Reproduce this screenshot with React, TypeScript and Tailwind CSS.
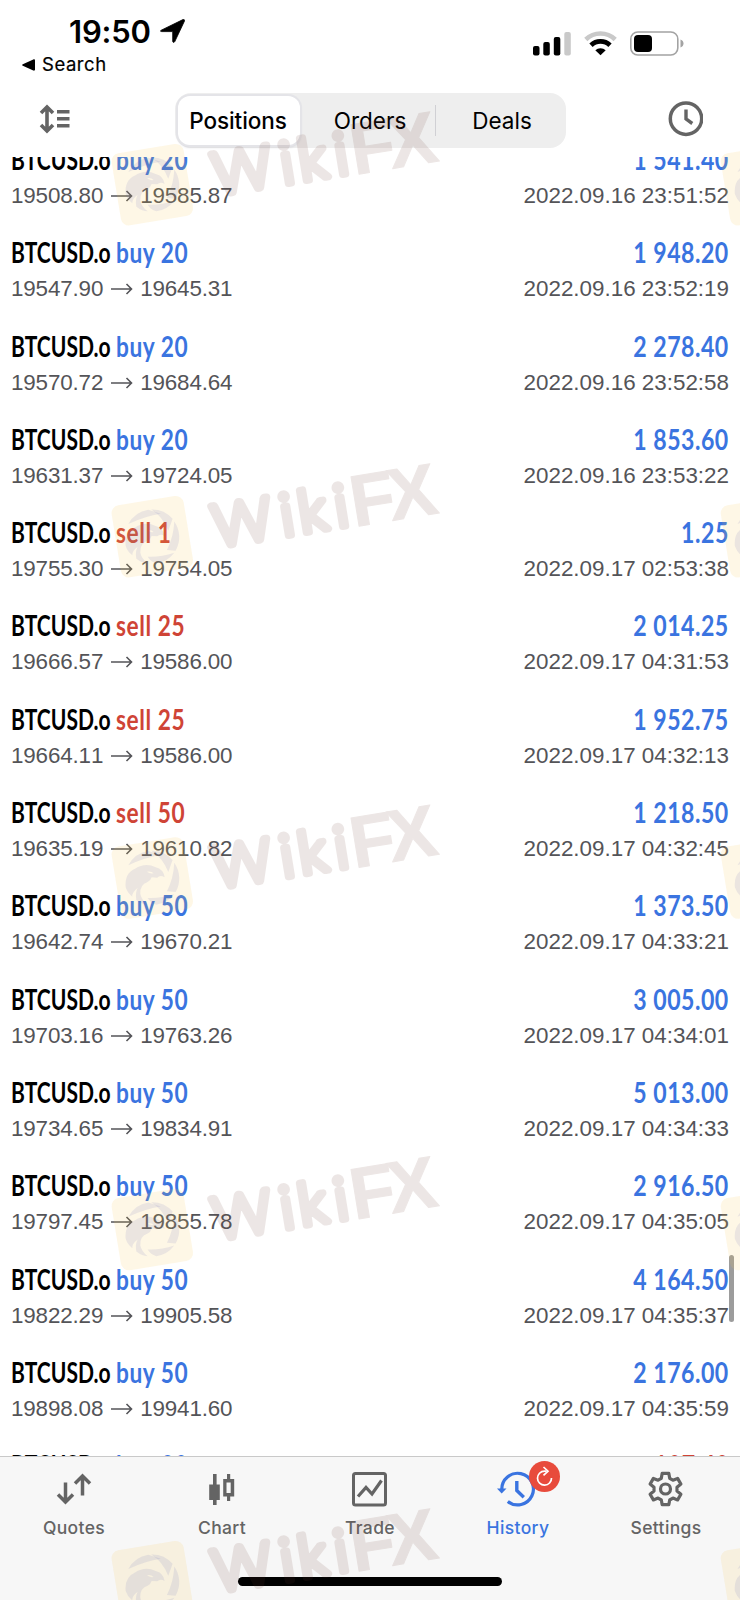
import React from 'react';

type Side = 'buy' | 'sell';

interface Position {
  side: Side;
  lots: number;
  open: string;
  close: string;
  profit: string;
  time: string;
}

const positions: Position[] = [
  { side: 'buy', lots: 20, open: '19508.80', close: '19585.87', profit: '1 541.40', time: '2022.09.16 23:51:52' },
  { side: 'buy', lots: 20, open: '19547.90', close: '19645.31', profit: '1 948.20', time: '2022.09.16 23:52:19' },
  { side: 'buy', lots: 20, open: '19570.72', close: '19684.64', profit: '2 278.40', time: '2022.09.16 23:52:58' },
  { side: 'buy', lots: 20, open: '19631.37', close: '19724.05', profit: '1 853.60', time: '2022.09.16 23:53:22' },
  { side: 'sell', lots: 1, open: '19755.30', close: '19754.05', profit: '1.25', time: '2022.09.17 02:53:38' },
  { side: 'sell', lots: 25, open: '19666.57', close: '19586.00', profit: '2 014.25', time: '2022.09.17 04:31:53' },
  { side: 'sell', lots: 25, open: '19664.11', close: '19586.00', profit: '1 952.75', time: '2022.09.17 04:32:13' },
  { side: 'sell', lots: 50, open: '19635.19', close: '19610.82', profit: '1 218.50', time: '2022.09.17 04:32:45' },
  { side: 'buy', lots: 50, open: '19642.74', close: '19670.21', profit: '1 373.50', time: '2022.09.17 04:33:21' },
  { side: 'buy', lots: 50, open: '19703.16', close: '19763.26', profit: '3 005.00', time: '2022.09.17 04:34:01' },
  { side: 'buy', lots: 50, open: '19734.65', close: '19834.91', profit: '5 013.00', time: '2022.09.17 04:34:33' },
  { side: 'buy', lots: 50, open: '19797.45', close: '19855.78', profit: '2 916.50', time: '2022.09.17 04:35:05' },
  { side: 'buy', lots: 50, open: '19822.29', close: '19905.58', profit: '4 164.50', time: '2022.09.17 04:35:37' },
  { side: 'buy', lots: 50, open: '19898.08', close: '19941.60', profit: '2 176.00', time: '2022.09.17 04:35:59' },
  { side: 'buy', lots: 20, open: '', close: '', profit: '-107.40', time: '' },
];

function StatusBar() {
  return (
    <div className="flex h-[86px] justify-between">
      <div className="pt-[12px] pl-[22px]">
        <div className="flex h-[38px] items-center pl-[47px]">
          <span className="text-[31px] leading-none font-semibold tracking-[-0.2px]">19:50</span>
          <svg width="25" height="24" viewBox="0 0 24 24" preserveAspectRatio="none" className="ml-[9px]">
            <path d="M1.2 11.2 22 .6c1-.5 1.9.3 1.5 1.4L14.2 22.6c-.6 1.2-2 1-2-.3V12.6H1.7C.3 12.6.1 11.8 1.2 11.2Z" stroke="#000" strokeWidth=".8" />
          </svg>
        </div>
        <div className="flex h-[29px] items-center">
          <svg width="13" height="12" viewBox="0 0 13 12">
            <path d="M.8 5.2 11.3.4c.9-.4 1.7 0 1.7 1v9.2c0 1-.8 1.4-1.7 1L.8 6.8C0 6.4 0 5.6.8 5.2Z" />
          </svg>
          <span className="ml-[7px] text-[18.5px] leading-none tracking-[0.55px] [-webkit-text-stroke:0.2px_black]">Search</span>
        </div>
      </div>
      <div className="flex items-start gap-[13px] pt-[31px] pr-[56px]">
        <svg width="38" height="25" viewBox="0 0 38 25">
          <rect x="0" y="15" width="6.5" height="9.5" rx="2" />
          <rect x="10.3" y="11" width="6.5" height="13.5" rx="2" />
          <rect x="20.8" y="6" width="6.5" height="18.5" rx="2" />
          <rect x="31.3" y="1" width="6.5" height="23.5" rx="2" fill="#c9c9c9" />
        </svg>
        <svg width="33" height="25" viewBox="0 0 33 25">
          <path d="M1.8 8.5a21 21 0 0 1 29.4 0" fill="none" stroke="#c9c9c9" strokeWidth="4.6" />
          <path d="M7 14.2a13.8 13.8 0 0 1 19 0" fill="none" stroke="#000" strokeWidth="4.8" />
          <path d="M16.5 24.3 11.3 19.2a7.6 7.6 0 0 1 10.4 0Z" />
        </svg>
        <svg width="54" height="25" viewBox="0 0 54 25">
          <rect x=".8" y="1" width="47" height="23" rx="7" fill="none" stroke="#a3a3a3" strokeWidth="1.6" />
          <rect x="4" y="4" width="18" height="17" rx="4" />
          <path d="M50.5 8.5q3 1.2 3 4t-3 4Z" fill="#a3a3a3" />
        </svg>
      </div>
    </div>
  );
}

function Toolbar() {
  return (
    <div className="flex h-[71px] items-start pt-[7px] pr-[37px] pl-[38px]">
      <svg width="32" height="52" viewBox="0 0 32 52" fill="none" stroke="#646464" strokeWidth="3.6">
        <path d="M9 15.5v21M3 20l6-6 6 6M3 32l6 6 6-6" />
        <path d="M19 18.8H31.5M19 25.8H31.5M19 32.8H31.5" />
      </svg>
      <div className="mr-auto ml-[105px] flex h-[55px] w-[391px] items-center rounded-[16px] bg-[#eeeeee] text-[22.5px]">
        <div className="ml-[3px] flex h-[49px] w-[122px] items-center justify-center rounded-[12px] bg-white pr-[2px] font-medium tracking-[-0.1px] shadow-[0_0_0_2px_#e4e4e8,0_2px_3px_#c8c8d0]">
          Positions
        </div>
        <div className="flex h-[31px] w-[136px] items-center justify-center border-r border-[#d0d0d4] pl-[5px]">Orders</div>
        <div className="flex flex-1 items-center justify-center pl-[2px]">Deals</div>
      </div>
      <svg width="36" height="52" viewBox="0 0 36 52" fill="none" stroke="#646464">
        <circle cx="19" cy="25.7" r="15.7" strokeWidth="3.5" />
        <path d="M19 16.5v9.5l6.3 4.5" strokeWidth="3.4" />
      </svg>
    </div>
  );
}

function PositionRow({ side, lots, open, close, profit, time }: Position) {
  const loss = profit.startsWith('-');
  return (
    <div className="h-[93.3px] shrink-0 pr-[11px] pl-[11px] whitespace-nowrap">
      <div className="flex justify-between pt-[4px] font-['Lato',sans-serif] text-[28px] leading-[36px] font-bold">
        <div className="flex">
          <div className="w-[105px] origin-left scale-x-[0.752]">BTCUSD.o</div>
          <div className={`origin-left scale-x-[0.81] tracking-[0.7px] ${side === 'buy' ? 'text-[#3a74e0]' : 'text-[#cf4436]'}`}>{side} {lots}</div>
        </div>
        <div className={`origin-right scale-x-[0.825] tracking-[0.6px] ${loss ? 'text-[#cf4436]' : 'text-[#3a74e0]'}`}>{profit}</div>
      </div>
      {time && (
        <div className="flex justify-between font-['Liberation_Sans',Arial,sans-serif] text-[22.4px] leading-[38px] text-[#545458] [font-kerning:none]">
          <div className="flex items-center tracking-[-0.15px]">
            <span>{open}</span>
            <svg width="22" height="14" viewBox="0 0 22 14" className="mr-[7px] ml-[8px]" fill="none" stroke="#545458" strokeWidth="1.6">
              <path d="M0 7h20.5M15.5 2l5 5-5 5" />
            </svg>
            <span>{close}</span>
          </div>
          <span>{time}</span>
        </div>
      )}
    </div>
  );
}

function QuotesIcon() {
  return (
    <svg width="36" height="36" viewBox="0 0 36 36" fill="none" stroke="#646464" strokeWidth="3.5">
      <path d="M9.5 11.5v19M2 23.5l7.5 7.5 7.5-7.5M26.5 24.5V5M19 12.5 26.5 5l7.5 7.5" />
    </svg>
  );
}

function ChartIcon() {
  return (
    <svg width="36" height="36" viewBox="0 0 36 36" fill="#646464">
      <path d="M9 3h3.6v10.5h3.2V29h-3.2v5H9v-5H5.2V13.5H9Z" />
      <path d="M23 3h3.2v5h4v17.5h-4V30H23v-4.5h-3.8V8H23Zm-.5 8.5V22h4.200V11.5Z" fillRule="evenodd" />
    </svg>
  );
}

function TradeIcon() {
  return (
    <svg width="36" height="36" viewBox="0 0 36 36" fill="none" stroke="#646464" strokeWidth="3">
      <rect x="1.5" y="2.5" width="32" height="31.5" rx="2" />
      <path d="m6 25.5 8-9 6 6.5L29.5 9.5" strokeWidth="3.2" />
    </svg>
  );
}

function HistoryIcon() {
  return (
    <svg width="40" height="36" viewBox="0.5 0 40 36" fill="none" stroke="#3a74e0" strokeWidth="3.2" className="-ml-[3px]">
      <path d="M5.3 18.5a15.8 15.8 0 1 1 6 12" />
      <path d="M.5 17.500H10L5.200 22.5Z" fill="#3a74e0" stroke="none" />
      <path d="M20.300 10v9.5l7 6.7" strokeWidth="3.4" />
    </svg>
  );
}

function SettingsIcon() {
  return (
    <svg width="36" height="36" viewBox="0.5 0 36 36" fill="none" stroke="#646464" strokeWidth="3.2" strokeLinejoin="round">
      <path d="M14.7 2.3h6.6l.9 5 3.2 1.9 4.7-1.8 3.3 5.7-3.9 3.2v3.7l3.9 3.2-3.3 5.7-4.7-1.8-3.2 1.9-.9 4.7h-6.6l-.9-4.7-3.2-1.9-4.7 1.8-3.3-5.7L6.5 20v-3.7l-3.9-3.2 3.3-5.7 4.7 1.8 3.2-1.9Z" />
      <circle cx="18" cy="18" r="5" />
    </svg>
  );
}

const tabs = [
  { label: 'Quotes', icon: <QuotesIcon /> },
  { label: 'Chart', icon: <ChartIcon /> },
  { label: 'Trade', icon: <TradeIcon /> },
  { label: 'History', icon: <HistoryIcon />, active: true },
  { label: 'Settings', icon: <SettingsIcon /> },
];

function TabBar() {
  return (
    <div className="flex h-[144px] flex-col items-center border-t border-[#c9c9c9] bg-[#f7f7f7]">
      <div className="flex w-full pt-[14px]">
        {tabs.map(t => (
          <div key={t.label} className="flex flex-1 flex-col items-center">
            <div className="relative">
              {t.icon}
              {t.active && (
                <div className="absolute -top-[10px] left-[29px] flex size-[31px] items-center justify-center rounded-full bg-[#e84b3c]">
                  <svg width="19" height="21" viewBox="0 0 19 21" fill="none" stroke="#fff" strokeWidth="1.7">
                    <path d="M11.5 5.2H9.5A7 7 0 1 0 16.5 12" />
                    <path d="m8.5 1 4.500 4.2-4.500 4.2" />
                  </svg>
                </div>
              )}
            </div>
            <span className={`mt-[9px] text-[17.5px] leading-[24px] font-medium tracking-[0.35px] ${t.active ? 'text-[#3a74e0]' : 'text-[#646464]'}`}>{t.label}</span>
          </div>
        ))}
      </div>
      <div className="mt-[37px] h-[9px] w-[264px] rounded-full bg-black" />
    </div>
  );
}

function WatermarkLogo() {
  return (
    <>
      <rect x="-36.5" y="-36.5" width="73" height="73" rx="8" transform="rotate(-9.3)" fill="rgba(245,200,80,0.14)" />
      <g transform="scale(0.333)" fill="rgba(86,87,185,0.11)">
        <path d="M-72-38A82 82 0 0 1-12-81L26-69Q-22-62-72-38Z" />
        <path d="M-3-82A82 82 0 0 1 61-54L48-18Q32-60-3-82Z" />
        <path d="M66-46A82 82 0 0 1 70 42L44 40Q64 0 66-46Z" />
        <path d="M-14 60Q25 62 66 48A82 82 0 0 1 12 80Q-5 75-14 60Z" />
        <path d="M-80 28Q-84-14-52-28Q-20-48 10-32Q34-26 37-2Q24-10 15-1L-2-2Q-5 8-14 12Q-38 20-36 48Q-32 66-14 80Q-30 80-48 66Q-52 44-44 30Q-62 44-60 56Q-74 46-80 28ZM-16-19Q-8-12 4-14Q-4-22-16-19Z" fillRule="evenodd" />
      </g>
    </>
  );
}

function Watermark({ x, y }: { x: number; y: number }) {
  return (
    <g transform={`translate(${x} ${y})`}>
      <WatermarkLogo />
      <g transform="rotate(-9.3)" opacity="0.12" fill="#6e3c32" stroke="#6e3c32" strokeLinejoin="round" strokeLinecap="round" fontFamily="Lato, sans-serif">
        <text y="20.5" x="61.5 129.5 148 184.5" fontSize="58" fontWeight="300" strokeWidth="7.5">Wiki</text>
        <text y="23" x="201 239" fontSize="73" fontWeight="700" strokeWidth="1" fontFamily="Liberation Sans, Arial, sans-serif">FX</text>
      </g>
    </g>
  );
}

function Watermarks() {
  return (
    <svg width="740" height="1600" viewBox="0 0 740 1600" className="pointer-events-none absolute inset-0">
      {[184.7, 536.7, 878, 1229.5, 1581.7].map(y => (
        <React.Fragment key={y}>
          <Watermark x={152.3} y={y} />
          <g transform={`translate(761.5 ${y})`}>
            <WatermarkLogo />
          </g>
        </React.Fragment>
      ))}
    </svg>
  );
}

export default function App() {
  return (
    <div className="relative flex h-[1600px] w-[740px] flex-col overflow-hidden bg-white font-['Inter',sans-serif] text-black">
      <StatusBar />
      <Toolbar />
      <div className="relative flex-1 overflow-hidden">
        <div className="-mt-[20px] flex flex-col">
          {positions.map((p, i) => (
            <PositionRow key={i} {...p} />
          ))}
        </div>
        <div className="absolute top-[1098px] right-[6px] h-[67px] w-[5px] rounded-full bg-[#9c9c9c]" />
      </div>
      <TabBar />
      <Watermarks />
    </div>
  );
}
